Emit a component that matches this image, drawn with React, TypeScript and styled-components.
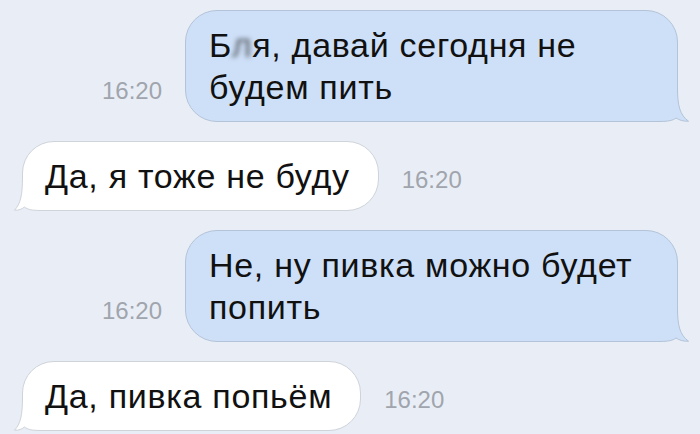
import React from 'react'
import styled, { createGlobalStyle } from 'styled-components'

type Side = 'out' | 'in'

interface Message {
  id: number
  side: Side
  time: string
  text: React.ReactNode
}

const palette = {
  page: '#e9eef6',
  outFill: '#cee0f8',
  outLine: '#b3c3d8',
  inFill: '#ffffff',
  inLine: '#cfd3da',
  time: '#a0a5ad',
}

const GlobalStyle = createGlobalStyle`
  html, body {
    margin: 0;
    padding: 0;
    background: ${palette.page};
  }
  body {
    font-family: 'Liberation Sans', Arial, Helvetica, sans-serif;
    -webkit-font-smoothing: antialiased;
  }
`

const Thread = styled.div`
  width: 700px;
  height: 434px;
  box-sizing: border-box;
  padding: 10px 22px 0 22px;
  display: flex;
  flex-direction: column;
  gap: 19px;
  overflow: hidden;
  background: ${palette.page};
`

const Row = styled.div<{ $side: Side }>`
  display: flex;
  align-items: flex-end;
  justify-content: ${({ $side }) => ($side === 'out' ? 'flex-end' : 'flex-start')};
  gap: 23px;
`

const Time = styled.span`
  font-size: 24px;
  line-height: 24px;
  color: ${palette.time};
  margin-bottom: 19px;
  flex-shrink: 0;
`

const Bubble = styled.div<{ $side: Side }>`
  position: relative;
  box-sizing: border-box;
  max-width: 493px;
  padding: ${({ $side }) => ($side === 'out' ? '13px 25px 13px 23px' : '13px 28px 13px 22px')};
  border-radius: 32px;
  font-size: 34px;
  line-height: 42px;
  letter-spacing: 0.7px;
  color: #111;
  background: ${({ $side }) => ($side === 'out' ? palette.outFill : palette.inFill)};
  border: 1px solid ${({ $side }) => ($side === 'out' ? palette.outLine : palette.inLine)};
`

const Tail = styled.svg<{ $side: Side }>`
  position: absolute;
  bottom: -1px;
  width: 50px;
  height: 34px;
  overflow: visible;
  ${({ $side }) => ($side === 'out' ? 'right: -12px;' : 'left: -12px;')}
`

const Content = styled.span`
  position: relative;
  z-index: 1;
`

const Censored = styled.span`
  filter: blur(2.5px);
  color: #52575e;
`

const messages: Message[] = [
  {
    id: 1,
    side: 'out',
    time: '16:20',
    text: (
      <>
        Б<Censored>л</Censored>я, давай сегодня не будем пить
      </>
    ),
  },
  { id: 2, side: 'in', time: '16:20', text: 'Да, я тоже не буду' },
  { id: 3, side: 'out', time: '16:20', text: 'Не, ну пивка можно будет попить' },
  { id: 4, side: 'in', time: '16:20', text: 'Да, пивка попьём' },
]

// hook that replaces the bottom corner: the outline, then the edge that closes the fill
const tailEdge: Record<Side, string> = {
  in: 'M11.5 0 C11.5 18 9.5 27 3.5 33.2 C8 33.5 11 32 13.5 30 C16.5 32.5 21 33.5 30 33.5 L50 33.5',
  out: 'M38.5 0 C38.5 18 41 27 49.5 33.2 C44 33.5 40 32 37 30 C34 32.5 29 33.5 20 33.5 L0 33.5',
}
const tailClose: Record<Side, string> = {
  in: ' L50 0 Z',
  out: ' L0 0 Z',
}

const BubbleTail: React.FC<{ side: Side }> = ({ side }) => {
  const fill = side === 'out' ? palette.outFill : palette.inFill
  const stroke = side === 'out' ? palette.outLine : palette.inLine
  return (
    <Tail $side={side} viewBox="0 0 50 34">
      <path d={tailEdge[side] + tailClose[side]} fill={fill} />
      <path d={tailEdge[side]} fill="none" stroke={stroke} strokeWidth="1" />
    </Tail>
  )
}

const App: React.FC = () => {
  return (
    <>
      <GlobalStyle />
      <Thread>
        {messages.map((m) => {
          const bubble = (
            <Bubble key="bubble" $side={m.side}>
              <BubbleTail side={m.side} />
              <Content>{m.text}</Content>
            </Bubble>
          )
          const time = <Time key="time">{m.time}</Time>
          return (
            <Row key={m.id} $side={m.side}>
              {m.side === 'out' ? [time, bubble] : [bubble, time]}
            </Row>
          )
        })}
      </Thread>
    </>
  )
}

export default App
